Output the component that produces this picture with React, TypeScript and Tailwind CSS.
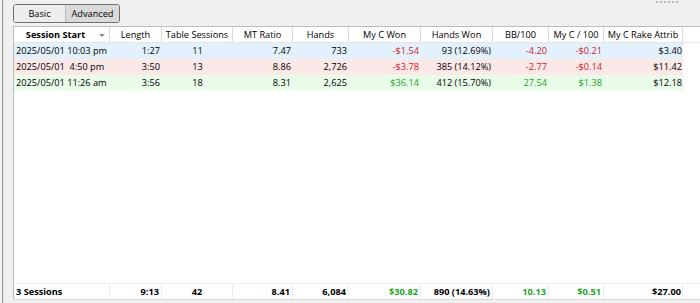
import React from "react";

type Row = {
    start: string;
    length: string;
    tables: string;
    mt: string;
    hands: string;
    won: string;
    handsWon: string;
    bb: string;
    per100: string;
    rake: string;
    bg: string;
    tone: "red" | "green";
};

const cols = "grid grid-cols-[96px_52px_71px_60px_56px_72px_72px_56px_55px_79px_1fr]";

const rows: Row[] = [
    { start: "2025/05/01 10:03 pm", length: "1:27", tables: "11", mt: "7.47", hands: "733", won: "-$1.54", handsWon: "93 (12.69%)", bb: "-4.20", per100: "-$0.21", rake: "$3.40", bg: "bg-[#e3f1fc]", tone: "red" },
    { start: "2025/05/01  4:50 pm", length: "3:50", tables: "13", mt: "8.86", hands: "2,726", won: "-$3.78", handsWon: "385 (14.12%)", bb: "-2.77", per100: "-$0.14", rake: "$11.42", bg: "bg-[#fde8e8]", tone: "red" },
    { start: "2025/05/01 11:26 am", length: "3:56", tables: "18", mt: "8.31", hands: "2,625", won: "$36.14", handsWon: "412 (15.70%)", bb: "27.54", per100: "$1.38", rake: "$12.18", bg: "bg-[#e9fce9]", tone: "green" },
];

const headers = ["Length", "Table Sessions", "MT Ratio", "Hands", "My C Won", "Hands Won", "BB/100", "My C / 100", "My C Rake Attrib"];

function Header() {
    return (
        <div className={`${cols} h-[16px] border-b border-[#e5e5e5] bg-white`}>
            <div className="flex items-center justify-center border-r border-[#dadada] relative pr-[12px] font-bold whitespace-nowrap">
                Session Start
                <svg className="absolute right-[4px] top-[7px]" width="6" height="4" viewBox="0 0 6 4">
                    <path d="M0 0 L6 0 L3 3 Z" fill="#8a8a8a" />
                </svg>
            </div>
            {headers.map((h) => (
                <div key={h} className="flex items-center justify-center border-r border-[#dadada] whitespace-nowrap">
                    {h}
                </div>
            ))}
            <div />
        </div>
    );
}

export default function App() {
    const tone = (t: "red" | "green") => (t === "red" ? "text-[#d01a2a]" : "text-[#22a522]");
    const cell = "h-full flex items-center whitespace-pre";

    return (
        <div className="w-[700px] h-[303px] bg-[#f0f0f0] flex overflow-hidden font-['Open_Sans',sans-serif] text-[9.2px] leading-none text-black">
            <div className="w-[2px] bg-[#f0f0f0]" />
            <div className="w-[1px] bg-[#9a9a9a]" />
            <div className="w-[1px] bg-[#dcdcdc]" />
            <div className="flex-1 flex flex-col pl-[9px]">
                {/* tabs + gripper */}
                <div className="h-[26px] flex items-start">
                    <div className="mt-[4px] flex h-[19px] border border-[#6e6e6e] rounded-[3px] overflow-hidden">
                        <div className="w-[52px] flex items-center justify-center bg-[#ededed] border-r border-[#bdbdbd]">Basic</div>
                        <div className="w-[53px] flex items-center justify-center bg-[#dadada]">Advanced</div>
                    </div>
                    <div className="ml-auto mr-[22px] mt-[1px] flex gap-[2px]">
                        {[0, 1, 2, 3, 4, 5].map((i) => (
                            <div key={i} className="w-[2px] h-[2px] rounded-full bg-[#a8a8a8]" />
                        ))}
                    </div>
                </div>

                {/* table */}
                <div className="flex-1 flex flex-col bg-white border-l border-t border-[#bcbcbc]">
                    <Header />
                    {rows.map((r) => (
                        <div key={r.start} className={`${cols} h-[16px]`}>
                            <div className={`${cell} ${r.bg} pl-[2px]`}>{r.start}</div>
                            <div className={`${cell} ${r.bg} justify-end pr-[2px]`}>{r.length}</div>
                            <div className={`${cell} ${r.bg} justify-center`}>{r.tables}</div>
                            <div className={`${cell} ${r.bg} justify-end pr-[2px]`}>{r.mt}</div>
                            <div className={`${cell} ${r.bg} justify-end pr-[2px]`}>{r.hands}</div>
                            <div className={`${cell} ${r.bg} justify-end pr-[2px] ${tone(r.tone)}`}>{r.won}</div>
                            <div className={`${cell} ${r.bg} justify-end pr-[2px]`}>{r.handsWon}</div>
                            <div className={`${cell} ${r.bg} justify-end pr-[2px] ${tone(r.tone)}`}>{r.bb}</div>
                            <div className={`${cell} ${r.bg} justify-end pr-[2px] ${tone(r.tone)}`}>{r.per100}</div>
                            <div className={`${cell} ${r.bg} justify-end pr-[1px]`}>{r.rake}</div>
                            <div />
                        </div>
                    ))}
                    <div className="flex-1" />
                    {/* totals */}
                    <div className={`${cols} h-[16px] font-bold border-t border-[#f0f0f0]`}>
                        <div className={`${cell} pl-[2px] border-r border-[#ececec]`}>3 Sessions</div>
                        <div className={`${cell} justify-end pr-[2px] border-r border-[#ececec]`}>9:13</div>
                        <div className={`${cell} justify-center border-r border-[#ececec]`}>42</div>
                        <div className={`${cell} justify-end pr-[2px] border-r border-[#ececec]`}>8.41</div>
                        <div className={`${cell} justify-end pr-[2px] border-r border-[#ececec]`}>6,084</div>
                        <div className={`${cell} justify-end pr-[2px] border-r border-[#ececec] text-[#22a522]`}>$30.82</div>
                        <div className={`${cell} justify-end pr-[2px] border-r border-[#ececec]`}>890 (14.63%)</div>
                        <div className={`${cell} justify-end pr-[2px] border-r border-[#ececec] text-[#22a522]`}>10.13</div>
                        <div className={`${cell} justify-end pr-[2px] border-r border-[#ececec] text-[#22a522]`}>$0.51</div>
                        <div className={`${cell} justify-end pr-[1px] border-r border-[#ececec]`}>$27.00</div>
                        <div />
                    </div>
                </div>
                <div className="h-[4px] bg-[#f0f0f0] border-t border-[#d8d8d8]" />
            </div>
        </div>
    );
}
